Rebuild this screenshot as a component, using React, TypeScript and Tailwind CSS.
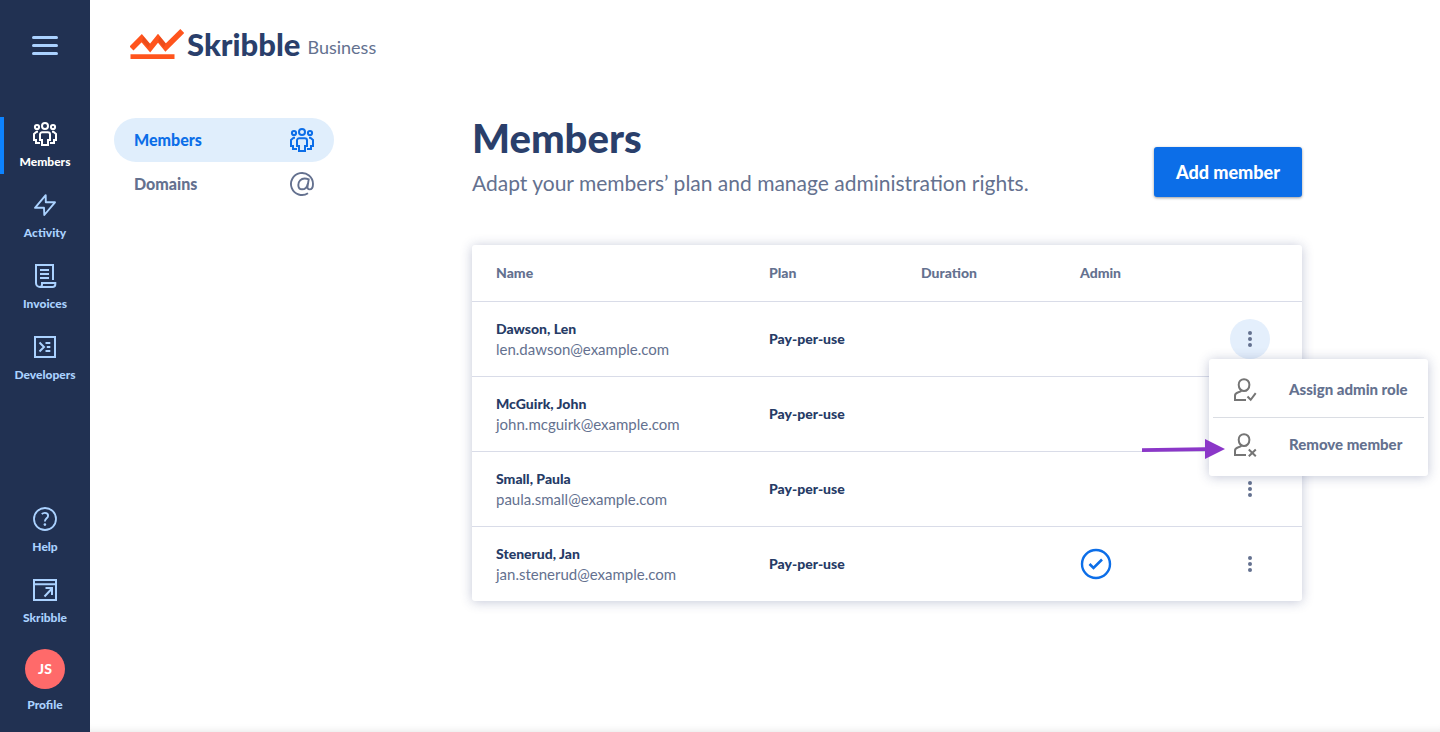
import { ReactNode, useState } from 'react';
import clsx from 'clsx';

interface IconProps {
    className?: string;
}

interface Member {
    name: string;
    email: string;
    plan: string;
    duration?: string;
    admin?: boolean;
}

const members: Member[] = [
    { name: 'Dawson, Len', email: 'len.dawson@example.com', plan: 'Pay-per-use' },
    { name: 'McGuirk, John', email: 'john.mcguirk@example.com', plan: 'Pay-per-use' },
    { name: 'Small, Paula', email: 'paula.small@example.com', plan: 'Pay-per-use' },
    { name: 'Stenerud, Jan', email: 'jan.stenerud@example.com', plan: 'Pay-per-use', admin: true },
];

function Icon({ className = 'size-6', children }: IconProps & { children: ReactNode }) {
    return (
        <svg
            viewBox="0 0 24 24"
            fill="none"
            stroke="currentColor"
            strokeWidth="2"
            className={className}
            aria-hidden="true"
        >
            {children}
        </svg>
    );
}

function MembersIcon() {
    return (
        <Icon>
            <circle cx="12" cy="4" r="3" />
            <circle cx="4" cy="5" r="2.1" />
            <circle cx="20" cy="5" r="2.1" />
            <path d="M9.2 10.2h5.6a2.2 2.2 0 0 1 2.2 2.2V18h-2v5H9v-5H7v-5.6a2.2 2.2 0 0 1 2.2-2.2z" />
            <path d="M5 9.8H3.600L1 12v6h2v3h4M19 9.800h1.400L23 12v6h-2v3h-4" />
        </Icon>
    );
}

function ActivityIcon() {
    return (
        <Icon>
            <path strokeWidth="1.9" strokeLinejoin="round" d="M12.700 2.200 2 14.800h9L11.300 22 22 9.300h-9.200z" />
        </Icon>
    );
}

function InvoicesIcon() {
    return (
        <Icon>
            <path d="M20 16V1H3v18a4 4 0 0 0 4 4h12.500a2.800 2.800 0 0 0 2.800-2.800V19H9v1.500C9 22 8 23 6.500 23M7 6h9M7 10h9M7 14h9" />
        </Icon>
    );
}

function DevelopersIcon() {
    return (
        <Icon>
            <rect x="2" y="2" width="20" height="20" />
            <path d="M6.500 7.500 11 12l-4.500 4.500M12.500 8h4.800M13.800 12h3.500M12.500 16h4.800" />
        </Icon>
    );
}

function HelpIcon() {
    return (
        <Icon>
            <circle cx="12" cy="12" r="11" strokeWidth="1.8" />
            <path strokeWidth="1.9" d="M8.800 7.200c.8-.9 1.800-1.300 3-1.300 2 0 3.300 1.100 3.300 2.800 0 2.600-3.200 2.700-3.200 5.800" />
            <circle cx="11.900" cy="17.600" r="1.3" fill="currentColor" stroke="none" />
        </Icon>
    );
}

function WindowIcon() {
    return (
        <Icon>
            <path d="M1 2h22v20H1zM1 6.200h22M11.500 18.500l7.500-8M12.500 10H19v7" />
        </Icon>
    );
}

function AtIcon() {
    return (
        <Icon>
            <path
                strokeWidth="1.9"
                d="M18 21.200A11 11 0 1 1 23 12c0 3.400-1.200 5.400-3.400 5.400-1.700 0-2.400-1.200-2-3.300l1.100-6.700c-1.300-.6-2.700-.9-4.100-.9-3.600 0-6.300 2.800-6.300 6.500 0 2.600 1.400 4.300 3.700 4.300 2.900 0 5.100-2.200 5.700-5.500"
            />
        </Icon>
    );
}

function PersonIcon({ children }: { children: ReactNode }) {
    return (
        <Icon className="size-6 text-[#757575]">
            <path d="M11 1.200c-3 0-5.300 2.300-5.300 5.600 0 3.500 2.300 6.300 5.300 6.300s5.400-2.800 5.400-6.300c0-3.300-2.300-5.600-5.400-5.600z" />
            <path d="M8.300 12.300c-.6 3-6.300 1-6.300 5.400V22h11" />
            {children}
        </Icon>
    );
}

function Logo() {
    return (
        <svg viewBox="0 0 54 30" className="h-[30px] w-[54px]" aria-hidden="true">
            <path d="M1.500 19.500 11.700 9.200l8.400 9.800L28 9.200l7.600 9.400L52.300 2" fill="none" stroke="#ff541d" strokeWidth="5.6" />
            <path d="M13.400 7.600 20 15l-1.800 3.500-6-6.800zM29.800 7.600l6 7.200-2.200 3.700-5.600-6.700z" fill="#d8431a" opacity=".5" />
            <path d="M.5 25.200h44V30H.5z" fill="#ff541d" />
        </svg>
    );
}

interface SideLinkProps {
    label: string;
    active?: boolean;
    children: ReactNode;
}

function SideLink({ label, active = false, children }: SideLinkProps) {
    return (
        <a
            href="#"
            className={clsx(
                'flex min-h-[57px] flex-col items-center gap-[6px] border-l-4 pt-[5px] pr-1 text-xs leading-5 font-black',
                active ? 'border-[#0d83ff] text-white' : 'border-transparent text-[#abd2ff]',
            )}
        >
            {children}
            {label}
        </a>
    );
}

function Sidebar() {
    return (
        <aside className="flex w-[90px] shrink-0 flex-col justify-between bg-[#213152] pb-[17px]">
            <div>
                <button type="button" aria-label="Menu" className="mx-auto mt-9 mb-[62px] flex w-[26px] flex-col gap-[5px] text-[#abd2ff]">
                    <span className="h-[3px] w-full rounded-full bg-current" />
                    <span className="h-[3px] w-full rounded-full bg-current" />
                    <span className="h-[3px] w-full rounded-full bg-current" />
                </button>
                <nav className="flex flex-col gap-[14px]">
                    <SideLink label="Members" active>
                        <MembersIcon />
                    </SideLink>
                    <SideLink label="Activity">
                        <ActivityIcon />
                    </SideLink>
                    <SideLink label="Invoices">
                        <InvoicesIcon />
                    </SideLink>
                    <SideLink label="Developers">
                        <DevelopersIcon />
                    </SideLink>
                </nav>
            </div>
            <nav className="flex flex-col gap-[14px]">
                <SideLink label="Help">
                    <HelpIcon />
                </SideLink>
                <SideLink label="Skribble">
                    <WindowIcon />
                </SideLink>
                <SideLink label="Profile">
                    <span className="flex size-10 items-center justify-center rounded-full bg-[#ff6a6a] text-sm text-white">JS</span>
                </SideLink>
            </nav>
        </aside>
    );
}

function RowMenu() {
    return (
        <div role="menu" className="absolute top-full -left-[21px] z-10 w-[219px] rounded-[3px] bg-white p-1 shadow-[0_1px_12px_rgba(40,55,110,0.28)]">
            <button type="button" role="menuitem" className="flex h-[55px] w-full items-center gap-8 border-b border-[#dadde3] pl-5 text-[15px] font-black whitespace-nowrap text-[#64718f]">
                <PersonIcon>
                    <path d="m14.500 18.500 3.200 3.300 5-6.600" />
                </PersonIcon>
                Assign admin role
            </button>
            <button type="button" role="menuitem" className="flex h-[54px] w-full items-center gap-8 pl-5 text-[15px] font-black whitespace-nowrap text-[#64718f]">
                <PersonIcon>
                    <path d="m15.800 16.500 7 6.800M22.800 16.500l-7 6.800" />
                </PersonIcon>
                Remove member
            </button>
            <svg viewBox="0 0 84 20" className="absolute top-20 -left-[67px] h-5 w-[84px]" aria-hidden="true">
                <path d="M0 9.300 63 8.300V0l20 10-20 10v-8L0 13z" fill="#8b37c8" />
            </svg>
        </div>
    );
}

function MemberRow({ member, open, onToggle }: { member: Member; open: boolean; onToggle: () => void }) {
    return (
        <tr className="h-[75px] border-t border-[#d9dce8]">
            <td className="pl-6">
                <div className="text-sm leading-5 font-black text-[#263b66]">{member.name}</div>
                <div className="text-[15px] leading-5 text-[#64718f]">{member.email}</div>
            </td>
            <td className="pl-6 text-sm font-black text-[#263b66]">{member.plan}</td>
            <td className="pl-6">{member.duration}</td>
            <td className="pl-6">
                {member.admin && (
                    <svg viewBox="0 0 32 32" fill="none" stroke="#0c6ee8" className="size-8" role="img" aria-label="Admin">
                        <circle cx="16" cy="16" r="14" strokeWidth="2.4" />
                        <path d="m9.500 16 4 4 8.500-8.500" strokeWidth="2.6" />
                    </svg>
                )}
            </td>
            <td className="pr-8">
                <div className="relative ml-auto size-10">
                    <button
                        type="button"
                        aria-label={`Options for ${member.name}`}
                        aria-expanded={open}
                        onClick={onToggle}
                        className={clsx('flex size-10 items-center justify-center rounded-full text-[#64718f]', open && 'bg-[#e4effc]')}
                    >
                        <svg viewBox="0 0 4 16" fill="currentColor" className="h-4 w-1" aria-hidden="true">
                            <circle cx="2" cy="2" r="2" />
                            <circle cx="2" cy="8" r="2" />
                            <circle cx="2" cy="14" r="2" />
                        </svg>
                    </button>
                    {open && <RowMenu />}
                </div>
            </td>
        </tr>
    );
}

export default function App() {
    const [openRow, setOpenRow] = useState<number | null>(0);

    return (
        <div className="flex min-h-screen bg-white font-['Lato',sans-serif]">
            <Sidebar />
            <div className="flex min-w-0 flex-1 flex-col shadow-[inset_0_-8px_8px_-8px_rgba(0,0,0,0.12)]">
                <header className="flex h-[118px] items-start pt-[29px] pl-10">
                    <a href="#" className="flex items-end gap-[3px]">
                        <Logo />
                        <span className="text-[31px] leading-[30px] font-black text-[#2a3f6b]">Skribble</span>
                        <span className="ml-1 text-lg leading-6 text-[#64718f]">Business</span>
                    </a>
                </header>

                <div className="flex gap-[138px] pr-[138px] pl-6">
                    <nav className="w-[220px] shrink-0 font-black">
                        <a href="#" className="flex h-11 items-center justify-between rounded-full bg-[#e0eefc] px-5 text-[#0c6ee8]">
                            Members
                            <MembersIcon />
                        </a>
                        <a href="#" className="flex h-11 items-center justify-between rounded-full px-5 text-[#64718f]">
                            Domains
                            <AtIcon />
                        </a>
                    </nav>

                    <main className="min-w-0 flex-1">
                        <div className="flex items-end justify-between">
                            <div>
                                <h1 className="text-[40px] leading-10 font-black text-[#2a3f6b]">Members</h1>
                                <p className="mt-[7px] text-[21px] leading-9 text-[#64718f]">
                                    Adapt your members’ plan and manage administration rights.
                                </p>
                            </div>
                            <button
                                type="button"
                                className="mb-1 h-[50px] w-[148px] shrink-0 rounded-[3px] bg-[#0c6ee8] text-lg font-black text-white shadow-[0_1px_3px_rgba(0,0,0,0.4)]"
                            >
                                Add member
                            </button>
                        </div>

                        <div className="mt-11 rounded-[3px] bg-white shadow-[0_1px_12px_rgba(40,55,110,0.28)]">
                            <table className="w-full table-fixed border-collapse text-left">
                                <thead>
                                    <tr className="h-[56px] text-sm text-[#64718f]">
                                        <th className="pl-6 font-black">Name</th>
                                        <th className="w-[152px] pl-6 font-black">Plan</th>
                                        <th className="w-[159px] pl-6 font-black">Duration</th>
                                        <th className="w-[120px] pl-6 font-black">Admin</th>
                                        <th className="w-[126px]" aria-label="Options" />
                                    </tr>
                                </thead>
                                <tbody>
                                    {members.map((member, index) => (
                                        <MemberRow
                                            key={member.email}
                                            member={member}
                                            open={openRow === index}
                                            onToggle={() => setOpenRow(openRow === index ? null : index)}
                                        />
                                    ))}
                                </tbody>
                            </table>
                        </div>
                    </main>
                </div>
            </div>
        </div>
    );
}
